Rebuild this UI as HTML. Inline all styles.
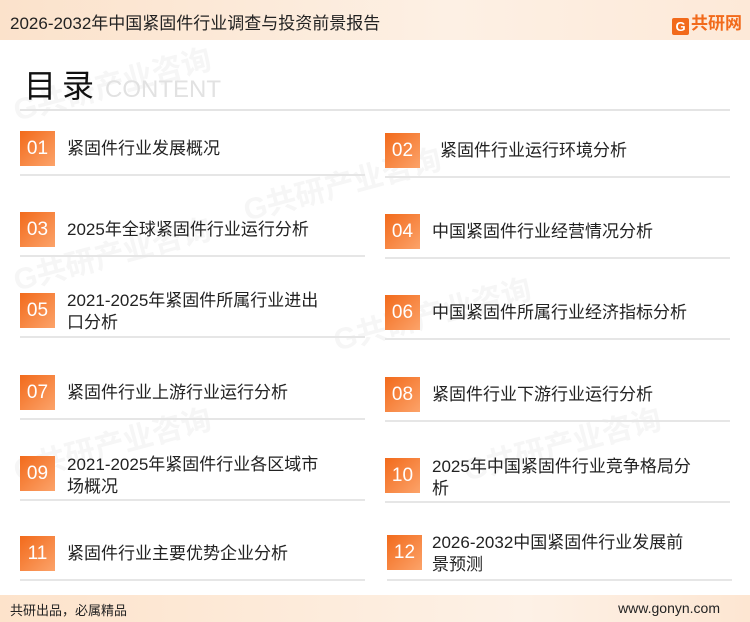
<!DOCTYPE html>
<html><head><meta charset="utf-8"><style>
*{margin:0;padding:0;box-sizing:border-box}
body{width:750px;height:622px;position:relative;background:#fff;font-family:"Liberation Sans","Noto Sans CJK SC",sans-serif;overflow:hidden;color:#222}
.hdr{position:absolute;left:0;top:0;width:750px;height:40px;background:linear-gradient(90deg,#fbe2cb,#fdf0e4 60%,#fde9d8)}
.hdr .t{position:absolute;left:10px;top:9px;font-size:17px;color:#222}
.logo{position:absolute;right:8px;top:9px;font-size:17px;font-weight:bold;color:#f26a1b}
.logo b{display:inline-block;width:17px;height:17px;background:#f26a1b;color:#fff;font-size:13px;text-align:center;line-height:17px;border-radius:2px;vertical-align:-2px;margin-right:2px}
.ttl{position:absolute;left:24px;top:64px;font-size:32px;line-height:44px;color:#111;letter-spacing:6px}
.en{position:absolute;left:105px;top:76px;font-size:24px;color:#e2e2e2}
.hl{position:absolute;left:20px;top:109px;width:710px;height:2px;background:#e4e4e4}
.badge{position:absolute;width:35px;height:35px;background:linear-gradient(135deg,#f26a1b,#fca36a);color:#fff;font-size:19px;text-align:center;line-height:35px}
.txt{position:absolute;font-size:17px;color:#222;line-height:22px}
.ln{position:absolute;height:2px;background:#e6e6e6;width:345px}
.ftr{position:absolute;left:0;top:595px;width:750px;height:27px;background:linear-gradient(90deg,#fde3cb,#fdf1e6 70%,#fde6d2)}
.ftr .a{position:absolute;left:10px;top:5px;font-size:13px}
.ftr .b{position:absolute;right:30px;top:5px;font-size:14px}
.wm{position:absolute;color:#f6f6f6;font-size:30px;font-weight:bold;transform:rotate(-15deg);white-space:nowrap}
</style></head><body>
<div class="wm" style="left:10px;top:60px">G共研产业咨询</div>
<div class="wm" style="left:240px;top:160px">G共研产业咨询</div>
<div class="wm" style="left:10px;top:230px">G共研产业咨询</div>
<div class="wm" style="left:330px;top:290px">G共研产业咨询</div>
<div class="wm" style="left:10px;top:420px">G共研产业咨询</div>
<div class="wm" style="left:460px;top:420px">G共研产业咨询</div>
<div class="hdr"><div class="t">2026-2032年中国紧固件行业调查与投资前景报告</div><div class="logo"><b>G</b>共研网</div></div>
<div class="ttl">目录</div><div class="en">CONTENT</div>
<div class="hl"></div>

<div class="badge" style="left:20px;top:131px">01</div><div class="txt" style="left:67px;top:138px">紧固件行业发展概况</div>
<div class="badge" style="left:385px;top:133px">02</div><div class="txt" style="left:440px;top:140px">紧固件行业运行环境分析</div>
<div class="ln" style="left:20px;top:174px"></div><div class="ln" style="left:385px;top:176px"></div>

<div class="badge" style="left:20px;top:212px">03</div><div class="txt" style="left:67px;top:219px">2025年全球紧固件行业运行分析</div>
<div class="badge" style="left:385px;top:214px">04</div><div class="txt" style="left:432px;top:221px">中国紧固件行业经营情况分析</div>
<div class="ln" style="left:20px;top:255px"></div><div class="ln" style="left:385px;top:257px"></div>

<div class="badge" style="left:20px;top:293px">05</div><div class="txt" style="left:67px;top:290px">2021-2025年紧固件所属行业进出<br>口分析</div>
<div class="badge" style="left:385px;top:295px">06</div><div class="txt" style="left:432px;top:302px">中国紧固件所属行业经济指标分析</div>
<div class="ln" style="left:20px;top:336px"></div><div class="ln" style="left:385px;top:338px"></div>

<div class="badge" style="left:20px;top:375px">07</div><div class="txt" style="left:67px;top:382px">紧固件行业上游行业运行分析</div>
<div class="badge" style="left:385px;top:377px">08</div><div class="txt" style="left:432px;top:384px">紧固件行业下游行业运行分析</div>
<div class="ln" style="left:20px;top:418px"></div><div class="ln" style="left:385px;top:420px"></div>

<div class="badge" style="left:20px;top:456px">09</div><div class="txt" style="left:67px;top:454px">2021-2025年紧固件行业各区域市<br>场概况</div>
<div class="badge" style="left:385px;top:458px">10</div><div class="txt" style="left:432px;top:456px">2025年中国紧固件行业竞争格局分<br>析</div>
<div class="ln" style="left:20px;top:499px"></div><div class="ln" style="left:385px;top:501px"></div>

<div class="badge" style="left:20px;top:536px">11</div><div class="txt" style="left:67px;top:543px">紧固件行业主要优势企业分析</div>
<div class="badge" style="left:387px;top:535px">12</div><div class="txt" style="left:432px;top:532px">2026-2032中国紧固件行业发展前<br>景预测</div>
<div class="ln" style="left:20px;top:579px"></div><div class="ln" style="left:387px;top:579px"></div>

<div class="ftr"><div class="a">共研出品，必属精品</div><div class="b">www.gonyn.com</div></div>
</body></html>
